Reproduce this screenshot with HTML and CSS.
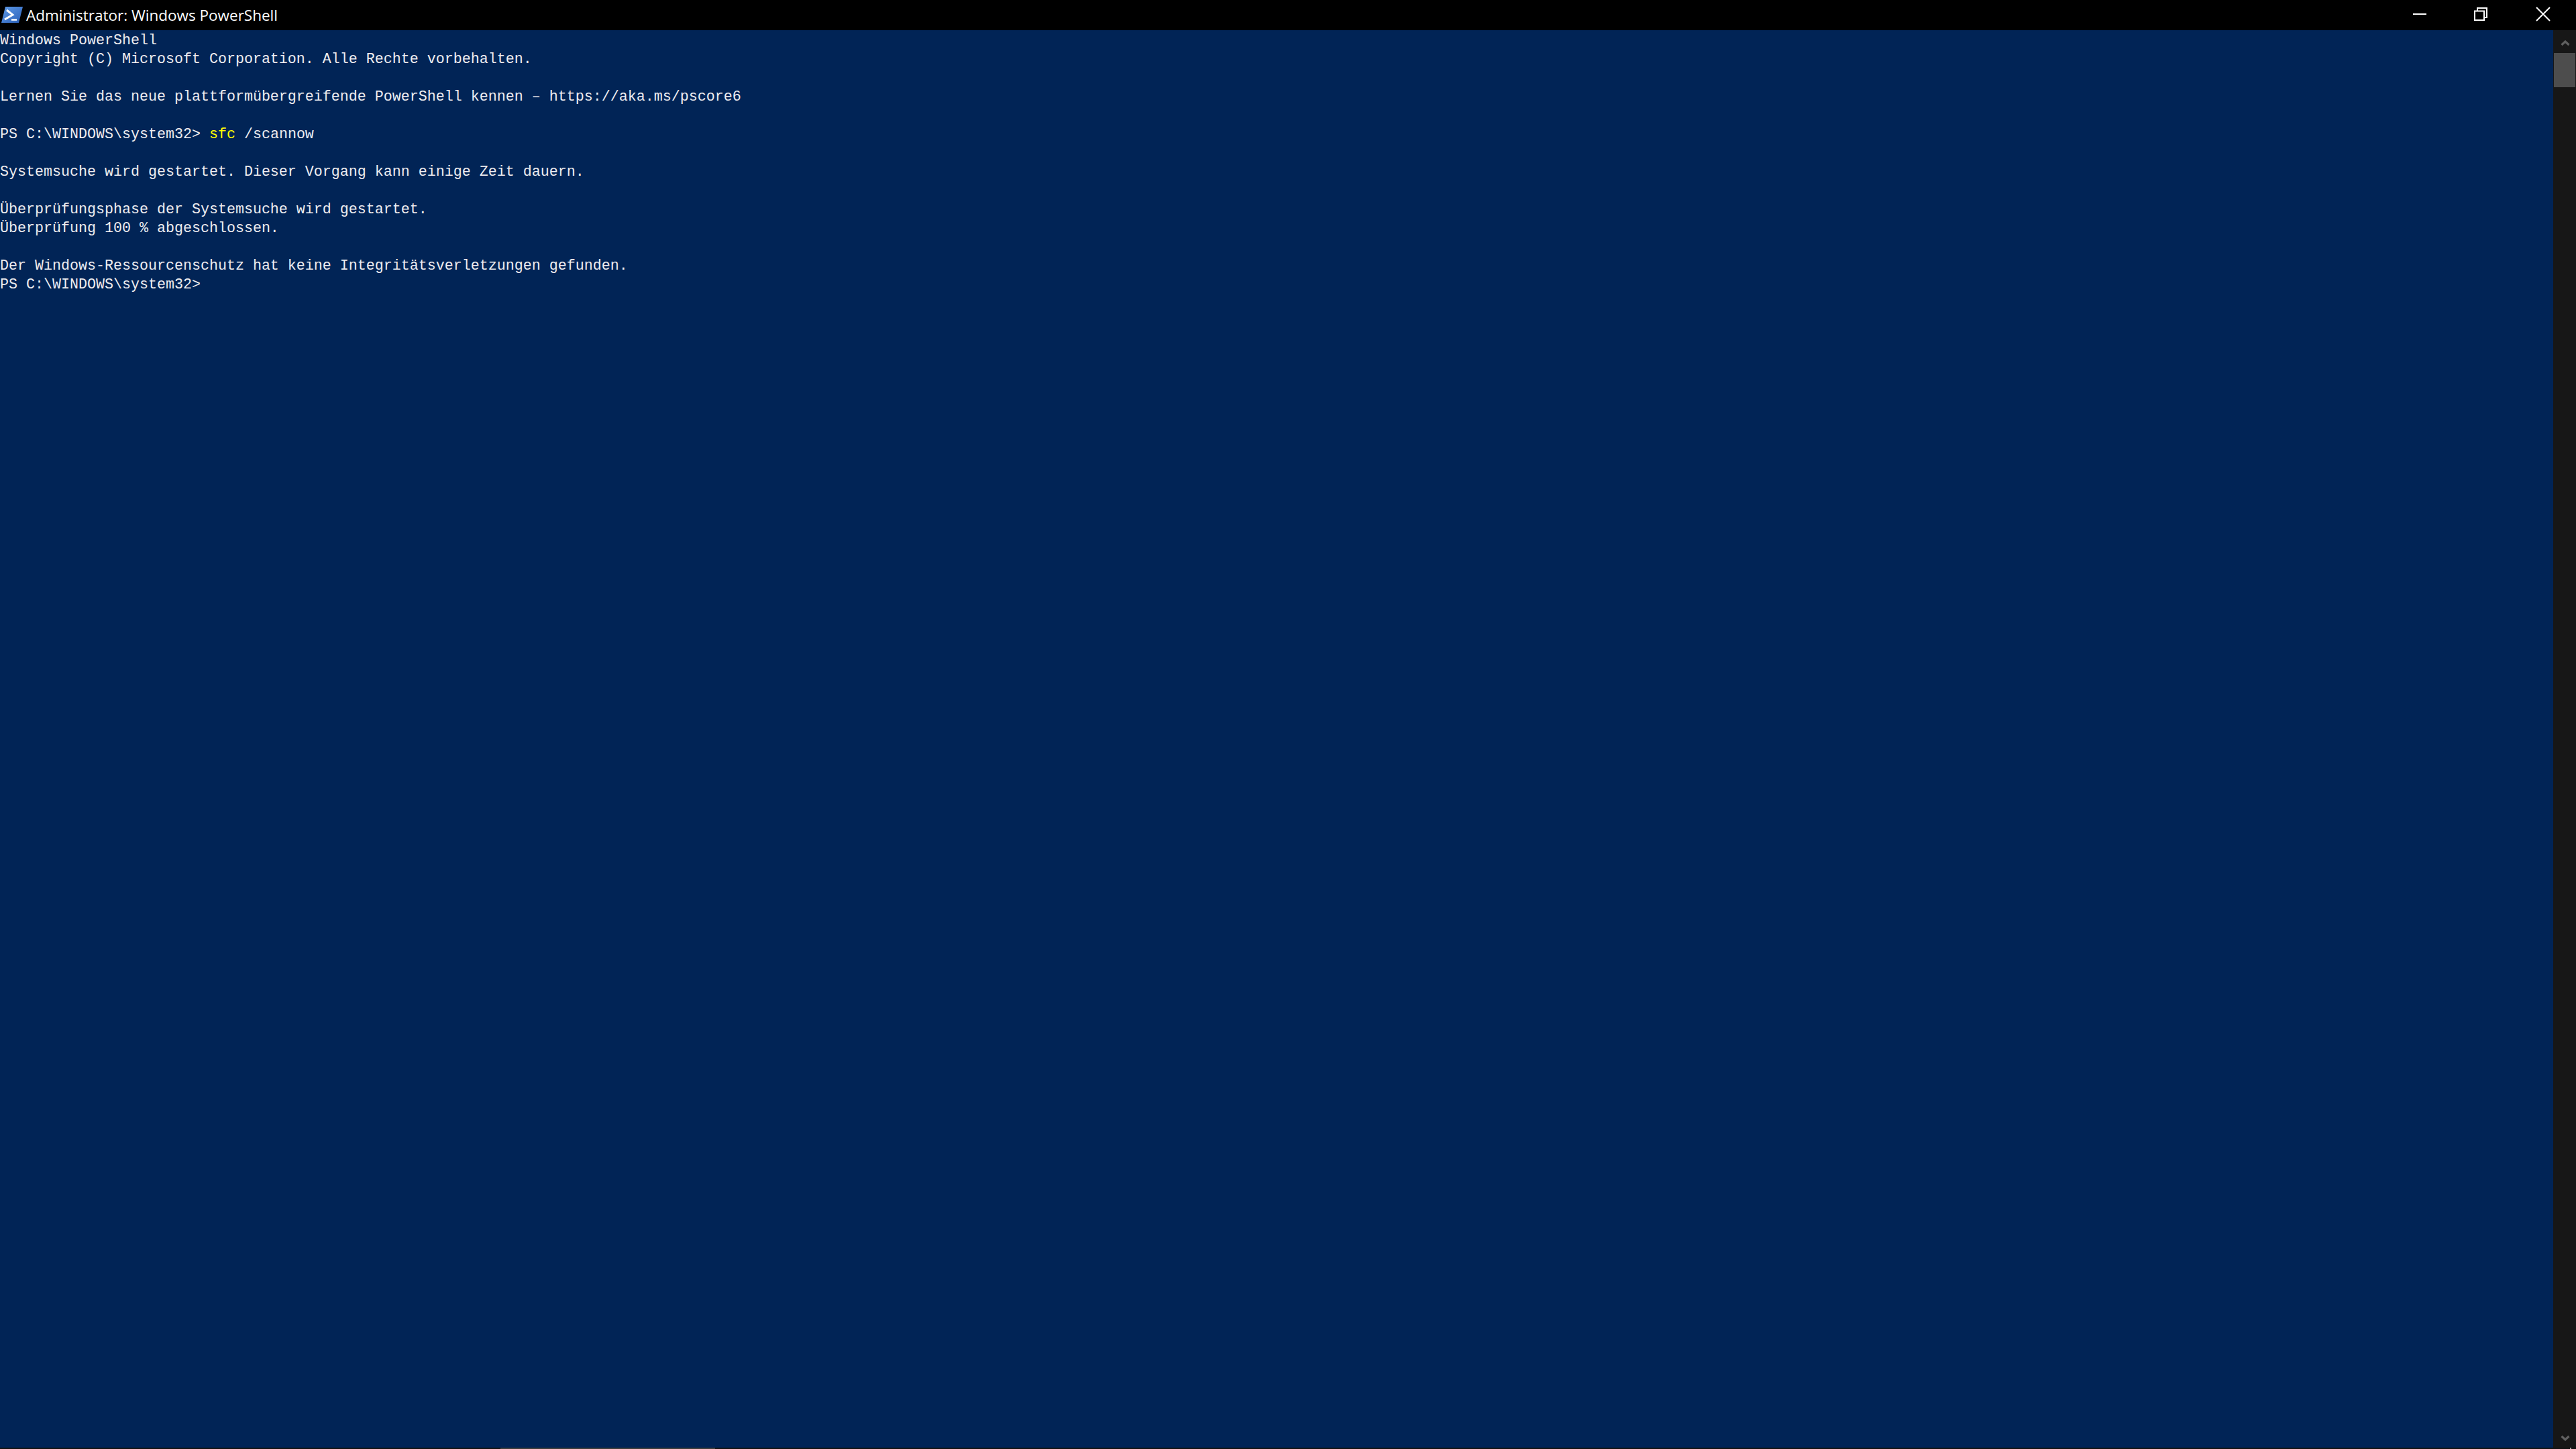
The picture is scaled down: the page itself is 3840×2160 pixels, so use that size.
FILE: index.html
```html
<!DOCTYPE html>
<html lang="de">
<head>
<meta charset="utf-8">
<title>Administrator: Windows PowerShell</title>
<link rel="stylesheet" href="styles.css">
</head>
<body>
<div class="window">
  <header class="titlebar">
    <svg class="app-icon" width="32" height="26" viewBox="0 0 32 26">
      <defs><linearGradient id="psg" x1="0" y1="0" x2="1" y2="1"><stop offset="0" stop-color="#5f9be8"/><stop offset="1" stop-color="#2a5fb8"/></linearGradient></defs>
      <path d="M6 1H32L26 25H0Z" fill="url(#psg)"/>
      <path d="M8 6L17 13L5 20" fill="none" stroke="#fff" stroke-width="3"/>
      <path d="M15 20.500H23" fill="none" stroke="#fff" stroke-width="2.5"/>
    </svg>
    <span class="title">Administrator: Windows PowerShell</span>
    <div class="controls">
      <svg class="ctl" width="92" height="45" viewBox="0 0 92 45"><path d="M33 21H53" stroke="#fff" stroke-width="2" fill="none"/></svg>
      <svg class="ctl" width="92" height="45" viewBox="0 0 92 45"><path d="M37 15.500V12H51V26H47M33 16.500H47V30H33Z" stroke="#fff" stroke-width="2" fill="none"/></svg>
      <svg class="ctl" width="92" height="45" viewBox="0 0 92 45"><path d="M33 11L53 31M53 11L33 31" stroke="#fff" stroke-width="2" fill="none"/></svg>
    </div>
  </header>
  <div class="body">
    <div class="console">
      <div class="line">Windows PowerShell</div>
      <div class="line">Copyright (C) Microsoft Corporation. Alle Rechte vorbehalten.</div>
      <div class="line"></div>
      <div class="line">Lernen Sie das neue plattformübergreifende PowerShell kennen – https://aka.ms/pscore6</div>
      <div class="line"></div>
      <div class="line">PS C:\WINDOWS\system32&gt; <span class="cmd">sfc</span> /scannow</div>
      <div class="line"></div>
      <div class="line">Systemsuche wird gestartet. Dieser Vorgang kann einige Zeit dauern.</div>
      <div class="line"></div>
      <div class="line">Überprüfungsphase der Systemsuche wird gestartet.</div>
      <div class="line">Überprüfung 100 % abgeschlossen.</div>
      <div class="line"></div>
      <div class="line">Der Windows-Ressourcenschutz hat keine Integritätsverletzungen gefunden.</div>
      <div class="line">PS C:\WINDOWS\system32&gt;</div>
    </div>
    <aside class="vscroll">
      <svg class="arrow" width="34" height="34" viewBox="0 0 34 34"><path d="M12.500 22L18 17L23.500 22" fill="none" stroke="#606060" stroke-width="3.200"/></svg>
      <div class="vthumb"></div>
      <div class="vspace"></div>
      <svg class="arrow" width="34" height="34" viewBox="0 0 34 34"><path d="M12.500 17L18 22L23.500 17" fill="none" stroke="#606060" stroke-width="3.200"/></svg>
    </aside>
  </div>
  <footer class="hscroll"><div class="hthumb"></div><div class="tick"></div></footer>
</div>
</body>
</html>
```
FILE: styles.css
```css
* { box-sizing: border-box; }
html, body { margin: 0; padding: 0; background: #012456; }
.window { width: 3840px; height: 2160px; display: flex; flex-direction: column; overflow: hidden; }
.titlebar { height: 45px; flex: none; background: #000; color: #fff; display: flex; align-items: center; padding-left: 2px; }
.app-icon { flex: none; margin-right: 5px; margin-top: -2px; }
.title { font-family: "Open Sans", sans-serif; font-size: 22.5px; white-space: nowrap; }
.controls { margin-left: auto; display: flex; }
.ctl { display: block; }
.body { flex: 1; display: flex; min-height: 0; }
.console { flex: 1; padding-top: 2px; font-family: "Liberation Mono", monospace; font-size: 21.67px; color: #eeedf0; }
.line { height: 28px; line-height: 28px; white-space: pre; }
.cmd { color: #ffff00; }
.vscroll { width: 34px; flex: none; background: #171717; display: flex; flex-direction: column; align-items: center; }
.arrow { display: block; flex: none; }
.vthumb { width: 32px; height: 51px; background: #4d4d4d; flex: none; }
.vspace { flex: 1; }
.hscroll { height: 2px; flex: none; background: #111; padding-left: 746px; display: flex; }
.hthumb { width: 320px; height: 2px; background: #3c3c3c; }
.tick { width: 2px; height: 2px; margin-left: 2765px; background: #a8a8a8; }
```
